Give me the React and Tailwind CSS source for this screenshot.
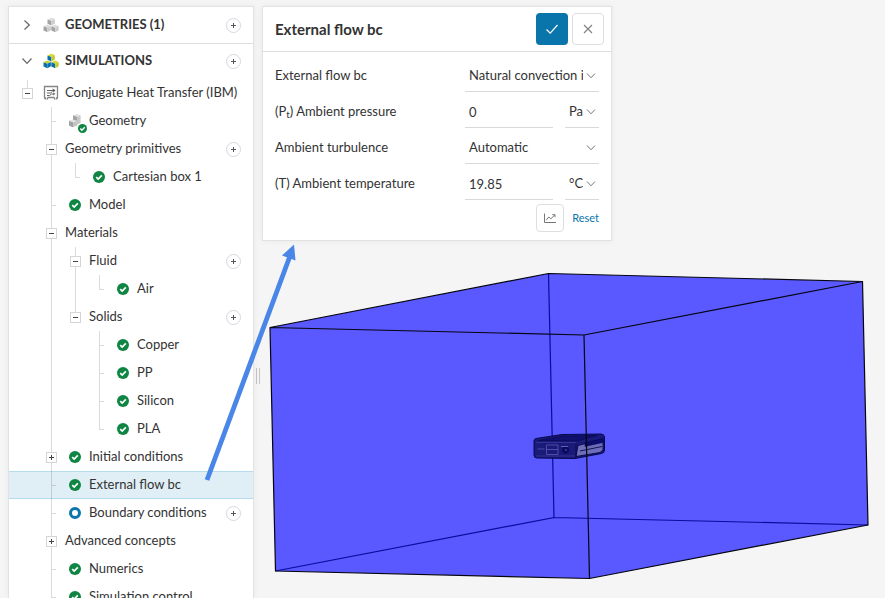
import React from "react";

const TREE = [
  { label: "Conjugate Heat Transfer (IBM)", guides: ["minusRoot"], icon: "analysis" },
  { label: "Geometry", guides: ["none", "tee"], icon: "geometry" },
  { label: "Geometry primitives", guides: ["none", "minusMid"], add: true },
  { label: "Cartesian box 1", guides: ["none", "line", "elbow"], icon: "done" },
  { label: "Model", guides: ["none", "tee"], icon: "done" },
  { label: "Materials", guides: ["none", "minusMid"] },
  { label: "Fluid", guides: ["none", "line", "minusMid"], add: true },
  { label: "Air", guides: ["none", "line", "line", "elbow"], icon: "done" },
  { label: "Solids", guides: ["none", "line", "minusEnd"], add: true },
  { label: "Copper", guides: ["none", "line", "none", "tee"], icon: "done" },
  { label: "PP", guides: ["none", "line", "none", "tee"], icon: "done" },
  { label: "Silicon", guides: ["none", "line", "none", "tee"], icon: "done" },
  { label: "PLA", guides: ["none", "line", "none", "elbow"], icon: "done" },
  { label: "Initial conditions", guides: ["none", "plusMid"], icon: "done" },
  { label: "External flow bc", guides: ["none", "tee"], icon: "done", selected: true },
  { label: "Boundary conditions", guides: ["none", "tee"], icon: "open", add: true },
  { label: "Advanced concepts", guides: ["none", "plusMid"] },
  { label: "Numerics", guides: ["none", "tee"], icon: "done" },
  { label: "Simulation control", guides: ["none", "tee"], icon: "done" },
];

const GUIDE_LINES = {
  none: "",
  line: "M12.5 0V28",
  tee: "M12.5 0V28M12.5 14.5H17",
  elbow: "M12.5 0V14.5H17",
  minusRoot: "M12.5 1V9",
  minusMid: "M12.5 0V9M12.5 20V28",
  minusEnd: "M12.5 0V9",
  plusMid: "M12.5 0V9M12.5 20V28",
};

function Guide({ kind }) {
  const lines = (
    <path d={GUIDE_LINES[kind]} fill="none" stroke="#000" strokeOpacity="0.14" shapeRendering="crispEdges" />
  );
  const isMinus = kind.startsWith("minus");
  const isPlus = kind.startsWith("plus");
  if (!isMinus && !isPlus) {
    return (
      <svg className="h-7 w-6 shrink-0" viewBox="0 0 24 28" aria-hidden="true">
        {lines}
      </svg>
    );
  }
  return (
    <button type="button" className="h-7 w-6 shrink-0" aria-label={isMinus ? "Collapse" : "Expand"}>
      <svg className="h-7 w-6" viewBox="0 0 24 28" aria-hidden="true">
        {lines}
        <rect x="7.5" y="9.5" width="10" height="10" fill="#fff" stroke="#d5d5d5" />
        <path d={isMinus ? "M10 14.5H15" : "M10 14.5H15M12.5 12V17"} stroke="#444" />
      </svg>
    </button>
  );
}

function Cube({ x, y, top, left, right }) {
  return (
    <g transform={`translate(${x} ${y})`}>
      <path d="M0 1.7L3.7 0L7.4 1.3L3.9 3.2z" fill={top} />
      <path d="M0 1.7L3.9 3.2V7.6L0 5.9z" fill={left} />
      <path d="M7.4 1.3L3.9 3.2V7.6L7.4 5.7z" fill={right} />
    </g>
  );
}

function Cubes({ colored }) {
  const palette = colored
    ? { top: "#d8d92a", left: "#0a70ad", right: "#c3cc2c" }
    : { top: "#dedede", left: "#a4a4a4", right: "#cbcbcb" };
  const lowerLeft = colored ? { top: "#c8d02c", left: "#0a70ad", right: "#0a70ad" } : palette;
  return (
    <svg className="size-4 shrink-0" viewBox="0 0 16 16" aria-hidden="true">
      <Cube x={4.5} y={0.8} {...palette} />
      <Cube x={0.5} y={7.6} {...lowerLeft} />
      <Cube x={8.3} y={7.6} {...palette} />
    </svg>
  );
}

function DoneBadge({ className }) {
  return (
    <svg className={className} viewBox="0 0 12 12" aria-hidden="true">
      <circle cx="6" cy="6" r="6" fill="#0f8544" />
      <path d="M3.2 6.1l2 2 3.6-3.8" fill="none" stroke="#fff" strokeWidth="1.7" />
    </svg>
  );
}

function NodeIcon({ kind }) {
  return (
    <span className="flex h-7 w-6 shrink-0 items-center justify-center">
      {kind === "done" && <DoneBadge className="size-3" />}
      {kind === "open" && (
        <svg className="size-3" viewBox="0 0 12 12" aria-hidden="true">
          <circle cx="6" cy="6" r="4.5" fill="#fff" stroke="#0a75ab" strokeWidth="3" />
        </svg>
      )}
      {kind === "analysis" && (
        <svg className="size-4" viewBox="0 0 16 16" fill="none" stroke="#858585" aria-hidden="true">
          <path d="M2.5 14.5V13H1.5V1.5H14.5V13H13.5V14.5M4 14.5L5 12.5H11L12 14.5" strokeWidth="1.3" />
          <path d="M4 5.5H10M4 8h3.500l2-1.500M4 10.5h2.500l2-1.500H11" stroke="#666" />
          <path d="M9.5 3.5l3 1.700L10.5 7.5z" fill="#555" stroke="none" />
          <path d="M10 7.5l2.500 1.300-2.200 1.700z" fill="#777" stroke="none" />
        </svg>
      )}
      {kind === "geometry" && (
        <svg className="size-6" viewBox="0 0 24 24" aria-hidden="true">
          <path d="M10 6.5l4-1.3 3.6 1.2V14l-3.4 1.8L10 14z" fill="#c9c9c9" />
          <path d="M10 6.5l4-1.3 3.6 1.2-3.6 1.6z" fill="#e2e2e2" />
          <path d="M14 8l-4-1.5V13l4 1.6z" fill="#a3a3a3" />
          <path d="M6 12l4-1.4 4 1.4v4.6l-4 1.6-4-1.8z" fill="#c4c4c4" />
          <path d="M6 12l4-1.4 4 1.4-4 1.6z" fill="#e4e4e4" />
          <path d="M6 12l4 1.6v4.6l-4-1.8z" fill="#a3a3a3" />
          <circle cx="19.5" cy="19.5" r="4.5" fill="#0f8544" />
          <path d="M17.3 19.6l1.6 1.6 2.8-3" fill="none" stroke="#fff" strokeWidth="1.4" />
        </svg>
      )}
    </span>
  );
}

function AddButton({ label }) {
  return (
    <button type="button" className="shrink-0" aria-label={`Add to ${label}`}>
      <svg className="block size-4" viewBox="0 0 16 16" fill="none" aria-hidden="true">
        <circle cx="8.5" cy="8.5" r="7" fill="#fff" stroke="#d3d9de" />
        <path d="M6 8.5H11M8.5 6V11" stroke="#555" strokeWidth="1" />
      </svg>
    </button>
  );
}

function SectionHeader({ label, open }) {
  return (
    <div className="flex h-[35px] items-center pr-3 pb-0.5 pl-1.5">
      <button type="button" className="flex h-6 w-6 items-center justify-center" aria-label={open ? "Collapse" : "Expand"}>
        <svg className="size-3" viewBox="0 0 12 12" fill="none" stroke="#666" strokeWidth="1.2" aria-hidden="true">
          <path d={open ? "M1.5 3.5L6 8.3l4.5-4.8" : "M3.5 1.5L8.3 6l-4.8 4.5"} />
        </svg>
      </button>
      <span className="flex w-6 justify-center">
        <Cubes colored={open} />
      </span>
      <h2 className="ml-0.5 flex-1 pb-0.5 text-[13px] leading-5 font-bold">{label}</h2>
      <AddButton label={label} />
    </div>
  );
}

function TreeRow({ node }) {
  return (
    <li
      className={
        node.selected
          ? "flex h-7 items-center bg-[#e0eff6] pr-3 pl-1.5 shadow-[inset_0_1px_#b5dcee,inset_0_-1px_#b5dcee]"
          : "flex h-7 items-center pr-3 pl-1.5"
      }
    >
      {node.guides.map((kind, i) => (
        <Guide key={i} kind={kind} />
      ))}
      {node.icon && <NodeIcon kind={node.icon} />}
      <button type="button" className="ml-0.5 flex-1 pb-0.5 text-left text-[13px] leading-5 whitespace-nowrap">
        {node.label}
      </button>
      {node.add && <AddButton label={node.label} />}
    </li>
  );
}

function Sidebar() {
  return (
    <aside className="z-10 mt-1.5 ml-2 w-[246px] shrink-0 overflow-hidden border border-b-0 border-[#e2e2e2] bg-white shadow-[0_0_6px_rgba(0,0,0,0.06)]">
      <div className="border-b border-[#dedede] pt-px">
        <SectionHeader label="GEOMETRIES (1)" open={false} />
      </div>
      <SectionHeader label="SIMULATIONS" open />
      <ul>
        {TREE.map((node) => (
          <TreeRow key={node.label} node={node} />
        ))}
      </ul>
    </aside>
  );
}

function Dropdown({ id, options, label }) {
  return (
    <div className="relative h-9 flex-1 border-b border-[#d9d9d9]">
      <select
        id={id}
        aria-label={label}
        className="h-full w-full appearance-none overflow-hidden bg-transparent pt-1 pr-4 pl-1 text-[13px] outline-none"
      >
        {options.map((option) => (
          <option key={option}>{option}</option>
        ))}
      </select>
      <svg
        className="pointer-events-none absolute top-3.5 right-[3px] size-2.5"
        viewBox="0 0 10 10"
        fill="none"
        stroke="#777"
        aria-hidden="true"
      >
        <path d="M1 3.5l4 4.3L9 3.5" />
      </svg>
    </div>
  );
}

function Quantity({ id, value, unit, units }) {
  return (
    <div className="flex gap-3">
      <input
        id={id}
        type="text"
        defaultValue={value}
        className="h-9 w-[88px] border-b border-[#d9d9d9] bg-transparent px-1 pt-1 text-[13px] outline-none"
      />
      <Dropdown label={unit} options={units} />
    </div>
  );
}

function Field({ id, label, children }) {
  return (
    <div className="flex h-9 items-center justify-between">
      <label htmlFor={id} className="pt-0.5 text-[13px] leading-5">
        {label}
      </label>
      <div className="w-[134px]">{children}</div>
    </div>
  );
}

function Panel() {
  return (
    <form
      className="relative mt-1.5 ml-2 w-[350px] border border-[#e2e2e2] bg-white shadow-[0_0_6px_rgba(0,0,0,0.06)]"
      onSubmit={(e) => e.preventDefault()}
    >
      <header className="flex h-[45px] items-center gap-1 border-b border-[#dedede] pr-[7px] pl-3">
        <h1 className="flex-1 text-[15px] leading-6 font-bold">External flow bc</h1>
        <button type="submit" aria-label="Apply" className="flex size-8 items-center justify-center rounded bg-[#0a75ab]">
          <svg className="size-3.5" viewBox="0 0 14 14" fill="none" stroke="#fff" strokeWidth="1.2" aria-hidden="true">
            <path d="M1.5 7.5l3.7 3.7L12.5 3" />
          </svg>
        </button>
        <button
          type="button"
          aria-label="Cancel"
          className="flex size-8 items-center justify-center rounded border border-[#dedede] bg-white"
        >
          <svg className="size-3" viewBox="0 0 12 12" fill="none" stroke="#808080" strokeWidth="1.1" aria-hidden="true">
            <path d="M2 2l8 8M10 2l-8 8" />
          </svg>
        </button>
      </header>
      <div className="pt-1 pr-3 pb-2 pl-3">
        <Field id="bc" label="External flow bc">
          <Dropdown id="bc" options={["Natural convection inlet/outlet", "Velocity inlet"]} />
        </Field>
        <Field
          id="pressure"
          label={
            <>
              (P<sub>t</sub>) Ambient pressure
            </>
          }
        >
          <Quantity id="pressure" value="0" unit="Pressure unit" units={["Pa", "psi"]} />
        </Field>
        <Field id="turbulence" label="Ambient turbulence">
          <Dropdown id="turbulence" options={["Automatic", "Manual"]} />
        </Field>
        <Field id="temperature" label="(T) Ambient temperature">
          <Quantity id="temperature" value="19.85" unit="Temperature unit" units={["°C", "K"]} />
        </Field>
        <div className="mt-1 flex items-center justify-end gap-2">
          <button
            type="button"
            aria-label="Plot values"
            className="flex size-7 items-center justify-center rounded border border-[#dedede]"
          >
            <svg className="size-3" viewBox="0 0 12 12" fill="none" stroke="#777" aria-hidden="true">
              <path d="M.5 1.5V10.5H12M2.2 8.2L4.8 5l2 1.8L10.8 3M8.3 2.7h2.700v2.5" />
            </svg>
          </button>
          <button type="reset" className="text-[11px] leading-5 text-[#0a75ab]">
            Reset
          </button>
        </div>
      </div>
    </form>
  );
}

function Scene() {
  return (
    <svg className="absolute inset-0 h-full w-full" role="img" aria-label="Flow domain around the device">
      <path d="M270 327.5L548.5 273.5L862.5 281.5L868 525L589.5 578.5L275.5 571z" fill="#5959ff" />
      <path d="M548.5 273.5L554 517.5L275.5 571M554 517.5L868 525" fill="none" stroke="#0b0b9c" strokeWidth="1.2" />
      <g stroke="#08084f" strokeLinejoin="round">
        <path d="M534 441q0-2 2-2.5L562 434.5l39-.5q3 0 3.5 3v13q0 3-3 3.5L575 458.5l-38-.5q-3 0-3-3z" fill="#1a1a78" />
        <path d="M538 440.5l25-4.5 34-.5-20 5.5z" fill="#10106e" strokeWidth="0.6" />
        <path d="M578 445.5l25-6.5v11l-3 2.5-24 4z" fill="#6e6eb8" strokeWidth="0.9" />
        <path d="M585 442.5l18-4v4l-18 4z" fill="#0b0b70" strokeWidth="0.5" />
        <path d="M536 442.5h40M536 456h39" stroke="#4444a8" fill="none" strokeWidth="0.6" />
        <path d="M546.5 445h11.5v9.5h-11.5zM537.5 449h7M546.5 449.5h11.5" stroke="#6464bc" fill="none" strokeWidth="0.7" />
        <circle cx="565.5" cy="450" r="3.2" fill="#0a0a60" strokeWidth="0.5" />
        <path d="M561 446.5h7M565 449.5l2 1" stroke="#8080d0" fill="none" strokeWidth="0.7" />
        <path d="M576 444v14M580 451l22-4.5" fill="none" strokeWidth="0.9" />
      </g>
      <path
        d="M270 327.5L548.5 273.5L862.5 281.5L868 525L589.5 578.5L275.5 571zM270 327.5L584 335L862.5 281.5M584 335L589.5 578.5"
        fill="none"
        stroke="#05050f"
        strokeWidth="1.2"
        strokeLinejoin="round"
      />
    </svg>
  );
}

function Callout() {
  return (
    <svg className="pointer-events-none absolute inset-0 z-20 h-full w-full" aria-hidden="true">
      <path d="M207 480L290 256" stroke="#4a86e8" strokeWidth="4.8" />
      <path d="M294 244.5L295.5 260.5L282 255.5z" fill="#4a86e8" />
    </svg>
  );
}

export default function App() {
  return (
    <div className="relative flex h-screen overflow-hidden bg-[#f5f5f5] font-['Lato',sans-serif] text-[#333]">
      <Scene />
      <Sidebar />
      <div className="relative flex w-0 items-center">
        <div className="ml-0.5 h-4 w-1 shrink-0 translate-y-[77px] border-x border-[#c4c4c4]" />
      </div>
      <main className="relative min-w-0 flex-1">
        <Panel />
      </main>
      <Callout />
    </div>
  );
}
